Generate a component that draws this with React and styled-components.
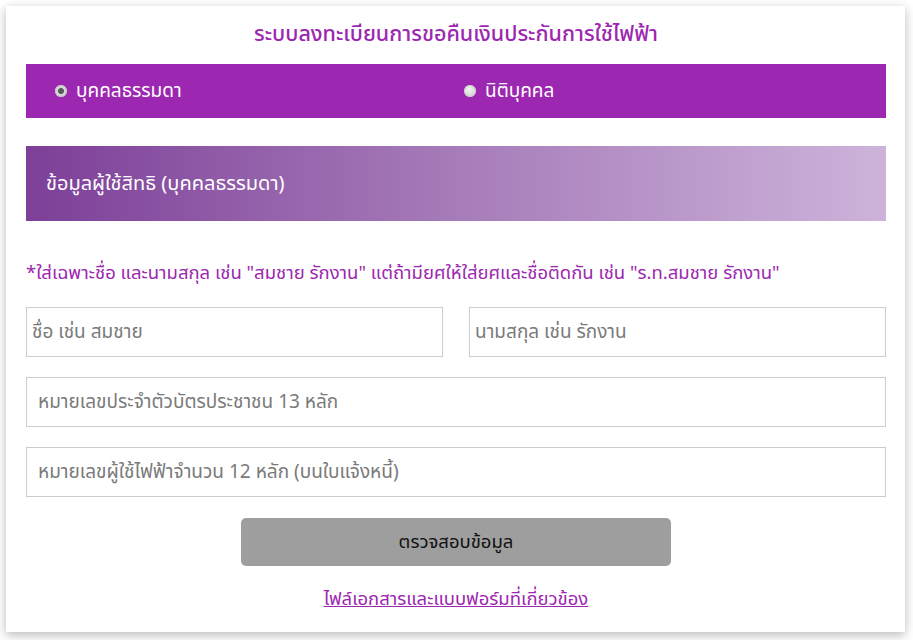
import React, { useState } from "react";
import styled, { createGlobalStyle } from "styled-components";

const Global = createGlobalStyle`
  html, body { margin: 0; padding: 0; background: #ffffff; }
  body { font-family: "Noto Sans Thai", "Noto Sans", "DejaVu Sans", sans-serif; }
  * { box-sizing: border-box; }
`;

const Card = styled.div`
  width: 899px;
  margin: 6px 8px 8px 6px;
  background: #fff;
  box-shadow: 0 3px 10px rgba(0, 0, 0, 0.28);
  padding: 0 19px 20px 20px;
  display: flex;
  flex-direction: column;
`;

const Title = styled.h1`
  margin: 0;
  height: 58px;
  line-height: 58px;
  text-align: center;
  font-size: 21.5px;
  font-weight: 500;
  color: #9c27b0;
`;

const TypeBar = styled.div`
  height: 54px;
  background: #9c27b0;
  display: grid;
  grid-template-columns: 1fr 1fr;
  align-items: center;
`;

const RadioLabel = styled.label`
  display: flex;
  align-items: center;
  gap: 9px;
  padding-left: ${(p) => p.$pad}px;
  color: #fff;
  font-size: 19px;
  cursor: pointer;
`;

const Radio = styled.input`
  appearance: none;
  margin: 0;
  width: 12px;
  height: 12px;
  border-radius: 50%;
  background: radial-gradient(circle at 40% 35%, #f4f4f4 0%, #d6d6d6 70%, #bdbdbd 100%);
  box-shadow: inset 0 0 0 1px #c8c8c8;
  &:checked {
    background: radial-gradient(circle, #5a5a5a 0 2.6px, #d9d9d9 3.4px, #c4c4c4 100%);
  }
`;

const SectionHead = styled.div`
  margin-top: 28px;
  height: 75px;
  display: flex;
  align-items: center;
  padding-left: 20px;
  color: #fff;
  font-size: 20px;
  background: linear-gradient(to right, #7d3f98 0%, #a276b6 45%, #cdb3da 100%);
`;

const Note = styled.p`
  margin: 39px 0 21px;
  line-height: 26px;
  font-size: 18.5px;
  color: #9c27b0;
  white-space: nowrap;
`;

const Fields = styled.div`
  display: flex;
  flex-direction: column;
  gap: 20px;
`;

const Row = styled.div`
  display: grid;
  grid-template-columns: repeat(${(p) => p.$cols}, 1fr);
  gap: 26px;
`;

const Field = styled.input`
  height: 50px;
  width: 100%;
  border: 1px solid #cccccc;
  padding: 0 ${(p) => p.$pad}px;
  font-family: inherit;
  font-size: 19px;
  color: #333;
  background: #fff;
  outline: none;
  &::placeholder { color: #7a7a7a; }
`;

const Button = styled.button`
  align-self: center;
  margin-top: 21px;
  width: 430px;
  height: 48px;
  border: none;
  border-radius: 5px;
  background: #9e9e9e;
  color: #111;
  font-family: inherit;
  font-size: 18.5px;
  cursor: pointer;
`;

const DocLink = styled.a`
  align-self: center;
  margin-top: 20px;
  line-height: 26px;
  font-size: 18.5px;
  color: #9c27b0;
  text-decoration: underline;
`;

export default function App() {
  const [type, setType] = useState("person");
  return (
    <>
      <Global />
      <Card>
        <Title>ระบบลงทะเบียนการขอคืนเงินประกันการใช้ไฟฟ้า</Title>
        <TypeBar>
          <RadioLabel $pad={29}>
            <Radio type="radio" name="t" checked={type === "person"} onChange={() => setType("person")} />
            บุคคลธรรมดา
          </RadioLabel>
          <RadioLabel $pad={8}>
            <Radio type="radio" name="t" checked={type === "corp"} onChange={() => setType("corp")} />
            นิติบุคคล
          </RadioLabel>
        </TypeBar>
        <SectionHead>ข้อมูลผู้ใช้สิทธิ (บุคคลธรรมดา)</SectionHead>
        <Note>*ใส่เฉพาะชื่อ และนามสกุล เช่น "สมชาย รักงาน" แต่ถ้ามียศให้ใส่ยศและชื่อติดกัน เช่น "ร.ท.สมชาย รักงาน"</Note>
        <Fields>
          <Row $cols={2}>
            <Field $pad={5} placeholder="ชื่อ เช่น สมชาย" />
            <Field $pad={5} placeholder="นามสกุล เช่น รักงาน" />
          </Row>
          <Row $cols={1}>
            <Field $pad={11} placeholder="หมายเลขประจำตัวบัตรประชาชน 13 หลัก" />
          </Row>
          <Row $cols={1}>
            <Field $pad={11} placeholder="หมายเลขผู้ใช้ไฟฟ้าจำนวน 12 หลัก (บนใบแจ้งหนี้)" />
          </Row>
        </Fields>
        <Button type="button">ตรวจสอบข้อมูล</Button>
        <DocLink href="#">ไฟล์เอกสารและแบบฟอร์มที่เกี่ยวข้อง</DocLink>
      </Card>
    </>
  );
}
